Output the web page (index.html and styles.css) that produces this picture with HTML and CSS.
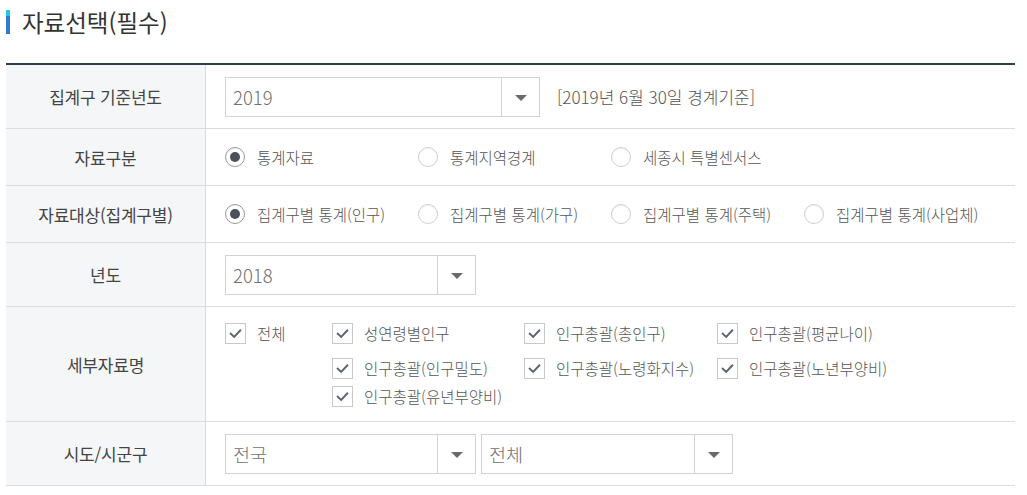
FILE: index.html
```html
<!DOCTYPE html>
<html lang="ko">
<head>
<meta charset="utf-8">
<title>자료선택(필수)</title>
<link rel="stylesheet" href="styles.css">
</head>
<body>
<div class="section">
  <h2 class="title"><span class="title-bar"></span>자료선택(필수)</h2>
  <div class="table">
    <div class="row r1">
      <div class="th">집계구 기준년도</div>
      <div class="td">
        <div class="select w314"><span class="val">2019</span><span class="arrow"></span></div>
        <span class="note">[2019년 6월 30일 경계기준]</span>
      </div>
    </div>
    <div class="row r2">
      <div class="th">자료구분</div>
      <div class="td">
        <label class="radio"><span class="circle on"></span>통계자료</label>
        <label class="radio"><span class="circle"></span>통계지역경계</label>
        <label class="radio"><span class="circle"></span>세종시 특별센서스</label>
      </div>
    </div>
    <div class="row r2">
      <div class="th">자료대상(집계구별)</div>
      <div class="td">
        <label class="radio"><span class="circle on"></span>집계구별 통계(인구)</label>
        <label class="radio"><span class="circle"></span>집계구별 통계(가구)</label>
        <label class="radio"><span class="circle"></span>집계구별 통계(주택)</label>
        <label class="radio"><span class="circle"></span>집계구별 통계(사업체)</label>
      </div>
    </div>
    <div class="row r1">
      <div class="th">년도</div>
      <div class="td">
        <div class="select w251"><span class="val">2018</span><span class="arrow"></span></div>
      </div>
    </div>
    <div class="row r5">
      <div class="th">세부자료명</div>
      <div class="td checks">
        <div class="all"><label class="check"><span class="box"><svg viewBox="0 0 20 20"><path d="M5 10.2 L8.6 13.6 L15 6.8" /></svg></span>전체</label></div>
        <div class="grid">
          <label class="check"><span class="box"><svg viewBox="0 0 20 20"><path d="M5 10.2 L8.6 13.6 L15 6.8" /></svg></span>성연령별인구</label>
          <label class="check"><span class="box"><svg viewBox="0 0 20 20"><path d="M5 10.2 L8.6 13.6 L15 6.8" /></svg></span>인구총괄(총인구)</label>
          <label class="check"><span class="box"><svg viewBox="0 0 20 20"><path d="M5 10.2 L8.6 13.6 L15 6.8" /></svg></span>인구총괄(평균나이)</label>
          <label class="check"><span class="box"><svg viewBox="0 0 20 20"><path d="M5 10.2 L8.6 13.6 L15 6.8" /></svg></span>인구총괄(인구밀도)</label>
          <label class="check"><span class="box"><svg viewBox="0 0 20 20"><path d="M5 10.2 L8.6 13.6 L15 6.8" /></svg></span>인구총괄(노령화지수)</label>
          <label class="check"><span class="box"><svg viewBox="0 0 20 20"><path d="M5 10.2 L8.6 13.6 L15 6.8" /></svg></span>인구총괄(노년부양비)</label>
          <label class="check"><span class="box"><svg viewBox="0 0 20 20"><path d="M5 10.2 L8.6 13.6 L15 6.8" /></svg></span>인구총괄(유년부양비)</label>
        </div>
      </div>
    </div>
    <div class="row r1">
      <div class="th">시도/시군구</div>
      <div class="td gap5">
        <div class="select w251"><span class="val">전국</span><span class="arrow"></span></div>
        <div class="select w252"><span class="val">전체</span><span class="arrow"></span></div>
      </div>
    </div>
  </div>
</div>
</body>
</html>
```

FILE: styles.css
```css
* { box-sizing: border-box; }
html, body { margin: 0; padding: 0; background: #fff; }
body {
  font-family: "Noto Sans CJK KR", "Noto Sans", sans-serif;
  color: #555;
}
.section { padding: 10px 12px 0 6px; }
.title {
  display: flex;
  align-items: center;
  gap: 12px;
  height: 24px;
  margin: 0 0 29px 0;
  font-size: 23.5px;
  font-weight: 400;
  color: #333;
  letter-spacing: 0;
}
.title-bar {
  width: 4px;
  height: 24px;
  background: linear-gradient(to bottom, #1fcbe3 0, #1fcbe3 6px, #2f7ccf 6px, #2f7ccf 100%);
}
.table {
  width: 1009px;
  border-top: 2px solid #2d3c57;
}
.row {
  display: grid;
  grid-template-columns: 200px 1fr;
  border-bottom: 1px solid #dcdcdc;
}
.r1 { height: 64px; }
.r2 { height: 57px; }
.r5 { height: 115px; }
.th {
  background: #f5f6f8;
  border-right: 1px solid #dcdcdc;
  display: flex;
  align-items: center;
  justify-content: center;
  font-size: 17px;
  font-weight: 400;
  color: #444;
  letter-spacing: -0.2px;
}
.td {
  display: flex;
  align-items: center;
  padding-left: 19px;
}
.gap5 { gap: 5px; }
.select {
  display: flex;
  height: 40px;
  border: 1px solid #d2d2d2;
  background: #fff;
}
.w314 { width: 315px; }
.w251 { width: 251px; }
.w252 { width: 252px; }
.select .val {
  flex: 1;
  display: flex;
  align-items: center;
  padding-left: 7px;
  font-size: 18.5px;
  font-weight: 300;
  color: #707070;
}
.select .arrow {
  width: 38px;
  border-left: 1px solid #d2d2d2;
  position: relative;
}
.select .arrow::after {
  content: "";
  position: absolute;
  left: 50%;
  top: 50%;
  margin-left: -6px;
  margin-top: -2px;
  border-left: 6px solid transparent;
  border-right: 6px solid transparent;
  border-top: 6px solid #6a6a6a;
}
.note {
  margin-left: 17px;
  font-size: 17px;
  font-weight: 300;
  color: #555;
}
.radio {
  width: 193px;
  display: flex;
  align-items: center;
  gap: 12px;
  font-size: 15.5px;
  font-weight: 300;
  color: #555;
  white-space: nowrap;
}
.circle {
  width: 20px;
  height: 20px;
  border-radius: 50%;
  border: 1px solid #cfcfcf;
  box-shadow: inset 0 1px 1px rgba(0,0,0,0.06);
  background: #fff;
  position: relative;
  flex: none;
}
.circle.on { border-color: #9a9a9a; }
.circle.on::after {
  content: "";
  position: absolute;
  left: 4px;
  top: 4px;
  width: 10px;
  height: 10px;
  border-radius: 50%;
  background: #4b505c;
}
.checks {
  align-items: flex-start;
  padding-top: 16px;
}
.all { width: 107px; }
.grid {
  display: grid;
  grid-template-columns: 192px 193px 193px;
  row-gap: 8px;
}
.grid .check:nth-child(-n+3) { margin-bottom: 7px; }
.check {
  display: flex;
  align-items: center;
  gap: 11px;
  height: 20px;
  font-size: 15.5px;
  font-weight: 300;
  color: #555;
  white-space: nowrap;
}
.box {
  width: 21px;
  height: 21px;
  border: 1px solid #c8c8c8;
  background: #fff;
  flex: none;
  display: flex;
}
.box svg { width: 19px; height: 19px; }
.box path {
  fill: none;
  stroke: #5b6270;
  stroke-width: 2;
  stroke-linecap: square;
}
```
